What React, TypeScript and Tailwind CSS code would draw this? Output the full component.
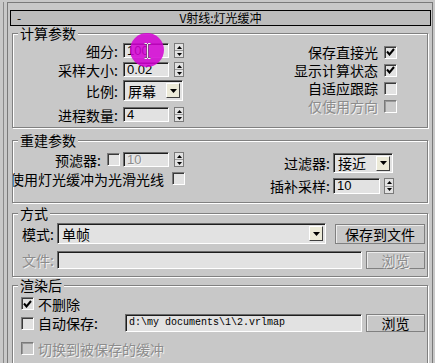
import React from 'react';

const sunken =
  'border border-t-[#6a6a6a] border-l-[#6a6a6a] border-b-white border-r-white shadow-[inset_1px_1px_0_#1e1e1e]';
const num = "font-['Liberation_Sans_Narrow','Liberation_Sans',sans-serif] text-[13px]";
const dim = 'text-[#8c8c8c] [text-shadow:1px_1px_0_#f2f2f2]';

const Check: React.FC<{ on?: boolean; off?: boolean }> = ({ on = false, off = false }) => (
  <div
    className={`w-[13px] h-[13px] shrink-0 flex items-center justify-center border border-t-[#7a7a7a] border-l-[#7a7a7a] border-b-white border-r-white ${
      off ? 'bg-[#cbcbcb] shadow-[inset_1px_1px_0_#9a9a9a]' : 'bg-[#e2e2e2] shadow-[inset_1px_1px_0_#3a3a3a]'
    }`}
  >
    {on && (
      <svg width="9" height="8" viewBox="0 0 9 8">
        <path d="M1 3.5L3.5 6.5L8 1" fill="none" stroke="#000" strokeWidth="2" />
      </svg>
    )}
  </div>
);

const Spin: React.FC<{ className?: string }> = ({ className = 'h-[15px]' }) => (
  <div className={`w-[10px] shrink-0 flex flex-col border border-[#7a7a7a] bg-[#e2e2e2] ${className}`}>
    <div className="flex-1 flex items-center justify-center border-b border-[#9a9a9a]">
      <svg width="5" height="3" viewBox="0 0 5 3">
        <path d="M0 3L2.5 0L5 3Z" fill="#000" />
      </svg>
    </div>
    <div className="flex-1 flex items-center justify-center">
      <svg width="5" height="3" viewBox="0 0 5 3">
        <path d="M0 0H5L2.5 3Z" fill="#000" />
      </svg>
    </div>
  </div>
);

const Drop: React.FC<{ value: string; className: string }> = ({ value, className }) => (
  <div className={`shrink-0 flex items-center justify-between pl-[4px] pr-[2px] bg-[#e2e2e2] ${sunken} ${className}`}>
    <span>{value}</span>
    <div className="w-[14px] h-[15px] flex items-center justify-center bg-[#ecead8] border border-t-white border-l-white border-b-[#404040] border-r-[#404040]">
      <svg width="7" height="4" viewBox="0 0 7 4">
        <path d="M0 0H7L3.5 4Z" fill="#000" />
      </svg>
    </div>
  </div>
);

const Field: React.FC<{ className: string; children?: React.ReactNode }> = ({ className, children }) => (
  <div className={`shrink-0 flex items-center pl-[3px] bg-[#e2e2e2] ${sunken} ${className}`}>{children}</div>
);

const Btn: React.FC<{ className: string; dis?: boolean; children: React.ReactNode }> = ({ className, dis, children }) => (
  <div
    className={`shrink-0 flex items-center justify-center border border-[#808080] shadow-[inset_1px_1px_0_#ececec] ${
      dis ? dim : ''
    } ${className}`}
  >
    {children}
  </div>
);

const Group: React.FC<{ title: string; className?: string; children: React.ReactNode }> = ({
  title,
  className = '',
  children,
}) => (
  <fieldset
    className={`ml-[4px] w-[416px] border border-[#808080] shadow-[inset_1px_1px_0_#fff,1px_1px_0_#fff] ${className}`}
  >
    <legend className="ml-[5px] px-[2px] bg-[#c8c8c8] leading-[14px]">{title}</legend>
    {children}
  </fieldset>
);

const LeftRow: React.FC<{ label: string; className?: string; children: React.ReactNode }> = ({
  label,
  className = 'h-[15px]',
  children,
}) => (
  <div className={`flex items-center ${className}`}>
    <span className="w-[105px] text-right">{label}</span>
    <div className="ml-[5px] flex items-center gap-[5px]">{children}</div>
  </div>
);

const RightCheck: React.FC<{ label: string; on?: boolean; off?: boolean }> = ({ label, on, off }) => (
  <div className="h-[18px] flex items-center justify-end gap-[6px]">
    <span className={off ? dim : ''}>{label}</span>
    <Check on={on} off={off} />
  </div>
);

const App: React.FC = () => {
  return (
    <div className="relative w-[435px] h-[363px] overflow-hidden bg-[#c8c8c8] pl-[3px] pt-[2px] font-['Noto_Sans_CJK_SC',sans-serif] text-[14px] leading-[14px] text-black">
      <div className="h-full border-l border-[#8a8a8a] pl-[3px]">
        <div className="h-full w-[426px] border-l border-t border-r border-[#7a7a7a]">
          {/* rollout title */}
          <div className="mt-[7px] ml-[2px] w-[421px] h-[16px] border border-black bg-[#bcbcbc] grid grid-cols-[1fr_auto_1fr] items-center text-[12px] leading-[12px]">
            <span className="pl-[6px]">-</span>
            <span>V射线:灯光缓冲</span>
            <span />
          </div>

          <Group title="计算参数">
            <div className="h-[87px] flex">
              <div className="pt-[3px] flex flex-col">
                <LeftRow label="细分:">
                  <Field className={`w-[46px] h-[15px] ${num}`}>100</Field>
                  <Spin />
                </LeftRow>
                <LeftRow label="采样大小:" className="mt-[4px] h-[15px]">
                  <Field className={`w-[46px] h-[15px] ${num}`}>0.02</Field>
                  <Spin />
                </LeftRow>
                <LeftRow label="比例:" className="mt-[3px] h-[21px]">
                  <Drop value="屏幕" className="w-[60px] h-[21px]" />
                </LeftRow>
                <LeftRow label="进程数量:" className="mt-[6px] h-[15px]">
                  <Field className={`w-[46px] h-[15px] ${num}`}>4</Field>
                  <Spin />
                </LeftRow>
              </div>
              <div className="ml-auto mr-[30px] pt-[3px] flex flex-col">
                <RightCheck label="保存直接光" on />
                <RightCheck label="显示计算状态" on />
                <RightCheck label="自适应跟踪" />
                <RightCheck label="仅使用方向" off />
              </div>
            </div>
          </Group>

          <Group title="重建参数" className="mt-[5px]">
            <div className="h-[55px] flex overflow-hidden">
              <div className="pt-[5px] flex flex-col">
                <div className="h-[15px] flex items-center">
                  <span className="w-[88px] text-right">预滤器:</span>
                  <div className="ml-[6px]">
                    <Check />
                  </div>
                  <Field className={`ml-[3px] w-[46px] h-[15px] ${num} ${dim}`}>10</Field>
                  <div className="ml-[5px]">
                    <Spin />
                  </div>
                </div>
                <div className="mt-[5px] h-[13px] flex items-center">
                  <span className="-ml-[3px] whitespace-nowrap">使用灯光缓冲为光滑光线</span>
                  <div className="ml-[8px]">
                    <Check />
                  </div>
                </div>
              </div>
              <div className="ml-auto mr-[33px] pt-[6px] grid grid-cols-[auto_auto] items-center gap-x-[3px] gap-y-[5px] self-start">
                <span className="text-right">过滤器:</span>
                <Drop value="接近" className="w-[60px] h-[20px]" />
                <span className="text-right">插补采样:</span>
                <div className="flex items-center gap-[4px]">
                  <Field className={`w-[47px] h-[16px] ${num}`}>10</Field>
                  <Spin className="h-[16px]" />
                </div>
              </div>
            </div>
          </Group>

          <Group title="方式" className="mt-[3px]">
            <div className="h-[56px] pl-[9px] pt-[3px] flex flex-col">
              <div className="h-[21px] flex items-center">
                <span className="w-[35px]">模式:</span>
                <Drop value="单帧" className="w-[269px] h-[21px]" />
                <Btn className="ml-[9px] w-[90px] h-[20px]">保存到文件</Btn>
              </div>
              <div className="mt-[7px] h-[18px] flex items-center">
                <span className={`w-[35px] ${dim}`}>文件:</span>
                <Field className="w-[305px] h-[18px]" />
                <Btn dis className="ml-[4px] w-[59px] h-[18px]">
                  浏览
                </Btn>
              </div>
            </div>
          </Group>

          <Group title="渲染后" className="mt-[1px]">
            <div className="h-[80px] pl-[8px] pt-[5px] flex flex-col">
              <div className="h-[13px] flex items-center gap-[4px]">
                <Check on />
                <span>不删除</span>
              </div>
              <div className="mt-[4px] h-[18px] flex items-center">
                <Check />
                <span className="ml-[4px] w-[87px]">自动保存:</span>
                <Field className="w-[237px] h-[18px] font-['Liberation_Mono',monospace] text-[10px] leading-[10px]">
                  {'d:\\my documents\\1\\2.vrlmap'}
                </Field>
                <Btn className="ml-[4px] w-[59px] h-[18px]">浏览</Btn>
              </div>
              <div className="mt-[10px] h-[13px] flex items-center gap-[4px]">
                <Check off />
                <span className={dim}>切换到被保存的缓冲</span>
              </div>
            </div>
          </Group>
        </div>
      </div>

      {/* click highlight + text cursor */}
      <div className="absolute left-[130px] top-[33px] w-[34px] h-[34px] rounded-full bg-[#d400d4] opacity-85" />
      <svg className="absolute left-[144px] top-[43px]" width="7" height="16" viewBox="0 0 7 16">
        <path d="M0.5 0.5H3M4 0.5H6.5M3.5 1V15M0.5 15.5H3M4 15.5H6.5" fill="none" stroke="#555" strokeWidth="2" />
        <path d="M0.5 0.5H3M4 0.5H6.5M3.5 1V15M0.5 15.5H3M4 15.5H6.5" fill="none" stroke="#eee" strokeWidth="1" />
      </svg>
    </div>
  );
};

export default App;
